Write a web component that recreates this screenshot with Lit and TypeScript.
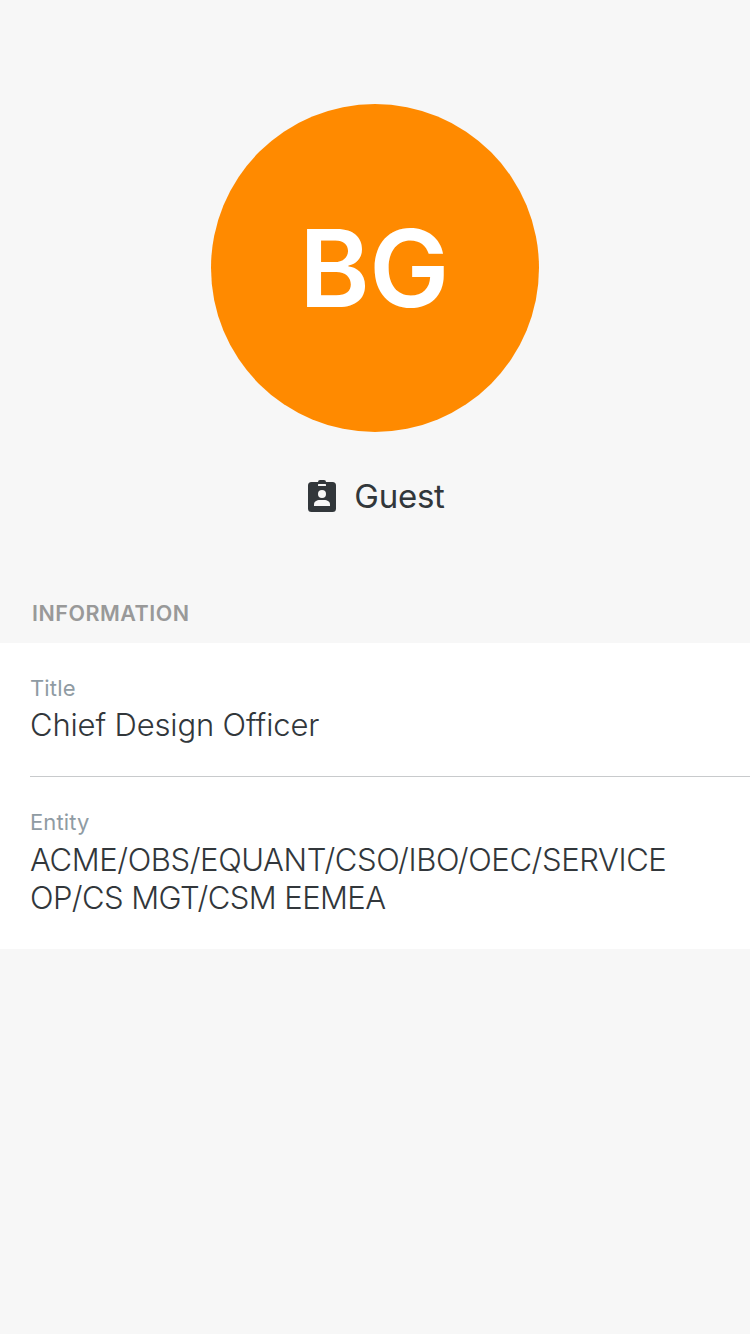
import { LitElement, html, css } from "lit";
import { customElement } from "lit/decorators.js";

@customElement("app-root")
class AppRoot extends LitElement {
  static styles = css`
    :host { display: flex; flex-direction: column; width: 100%; min-height: 1334px; background: #f7f7f7; font-family: Inter, sans-serif; color: #32373b; }
    .header { display: flex; flex-direction: column; align-items: center; height: 643px; padding-top: 104px; box-sizing: border-box; }
    .avatar { display: flex; align-items: center; justify-content: center; width: 328px; height: 328px; padding-right: 2px; box-sizing: border-box; border-radius: 50%; background: #ff8a00; color: #fff; font-size: 107px; font-weight: 600; letter-spacing: -0.7px; }
    .role { display: flex; align-items: center; gap: 18px; height: 40px; margin: 44px 0 0 3px; font-size: 33px; letter-spacing: -0.25px; }
    .role svg { width: 28px; height: 32px; }
    h2 { align-self: flex-start; margin: 83px 0 0 32px; font-size: 21.5px; line-height: 28px; font-weight: 600; letter-spacing: 0.5px; color: #999; }
    .list { background: #fff; padding-left: 30px; height: 306px; box-sizing: border-box; }
    .row { box-sizing: border-box; padding-top: 31px; height: 134px; border-bottom: 1px solid #c8cacc; }
    .row.last { border: 0; height: 172px; }
    .label { font-size: 22px; line-height: 28px; letter-spacing: 0.15px; color: #8f9ba3; }
    .value { font-size: 31px; line-height: 38px; font-weight: 300; padding-top: 4px; width: 650px; letter-spacing: -0.15px; font-feature-settings: "calt" 0; font-variant-ligatures: none; }
    .last .value { padding-top: 5px; letter-spacing: -0.4px; }
    .second { letter-spacing: -0.58px; }
  `;
  render() {
    return html`
      <div class="header">
        <div class="avatar"><span>BG</span></div>
        <div class="role">
          <svg viewBox="0 0 28 32"><path fill="#32373b" d="M3.5 2H10Q10 0 12 0H16Q18 0 18 2H24.5A3.5 3.5 0 0 1 28 5.5V28.5A3.5 3.5 0 0 1 24.5 32H3.5A3.5 3.5 0 0 1 0 28.5V5.5A3.5 3.5 0 0 1 3.5 2Z"/><rect x="10" y="4" width="8" height="2" rx=".5" fill="#f7f7f7"/><circle cx="14" cy="14" r="4" fill="#f7f7f7"/><path fill="#f7f7f7" d="M6 26V24.5C6 21.5 8.500 20 12 20H16C19.500 20 22 21.500 22 24.500V26Z"/></svg>
          <span>Guest</span>
        </div>
        <h2>INFORMATION</h2>
      </div>
      <div class="list">
        <div class="row"><div class="label">Title</div><div class="value">Chief Design Officer</div></div>
        <div class="row last"><div class="label">Entity</div><div class="value">ACME/OBS/EQUANT/CSO/IBO/OEC/SERVICE<br><span class="second">OP/CS MGT/CSM EEMEA</span></div></div>
      </div>`;
  }
}
